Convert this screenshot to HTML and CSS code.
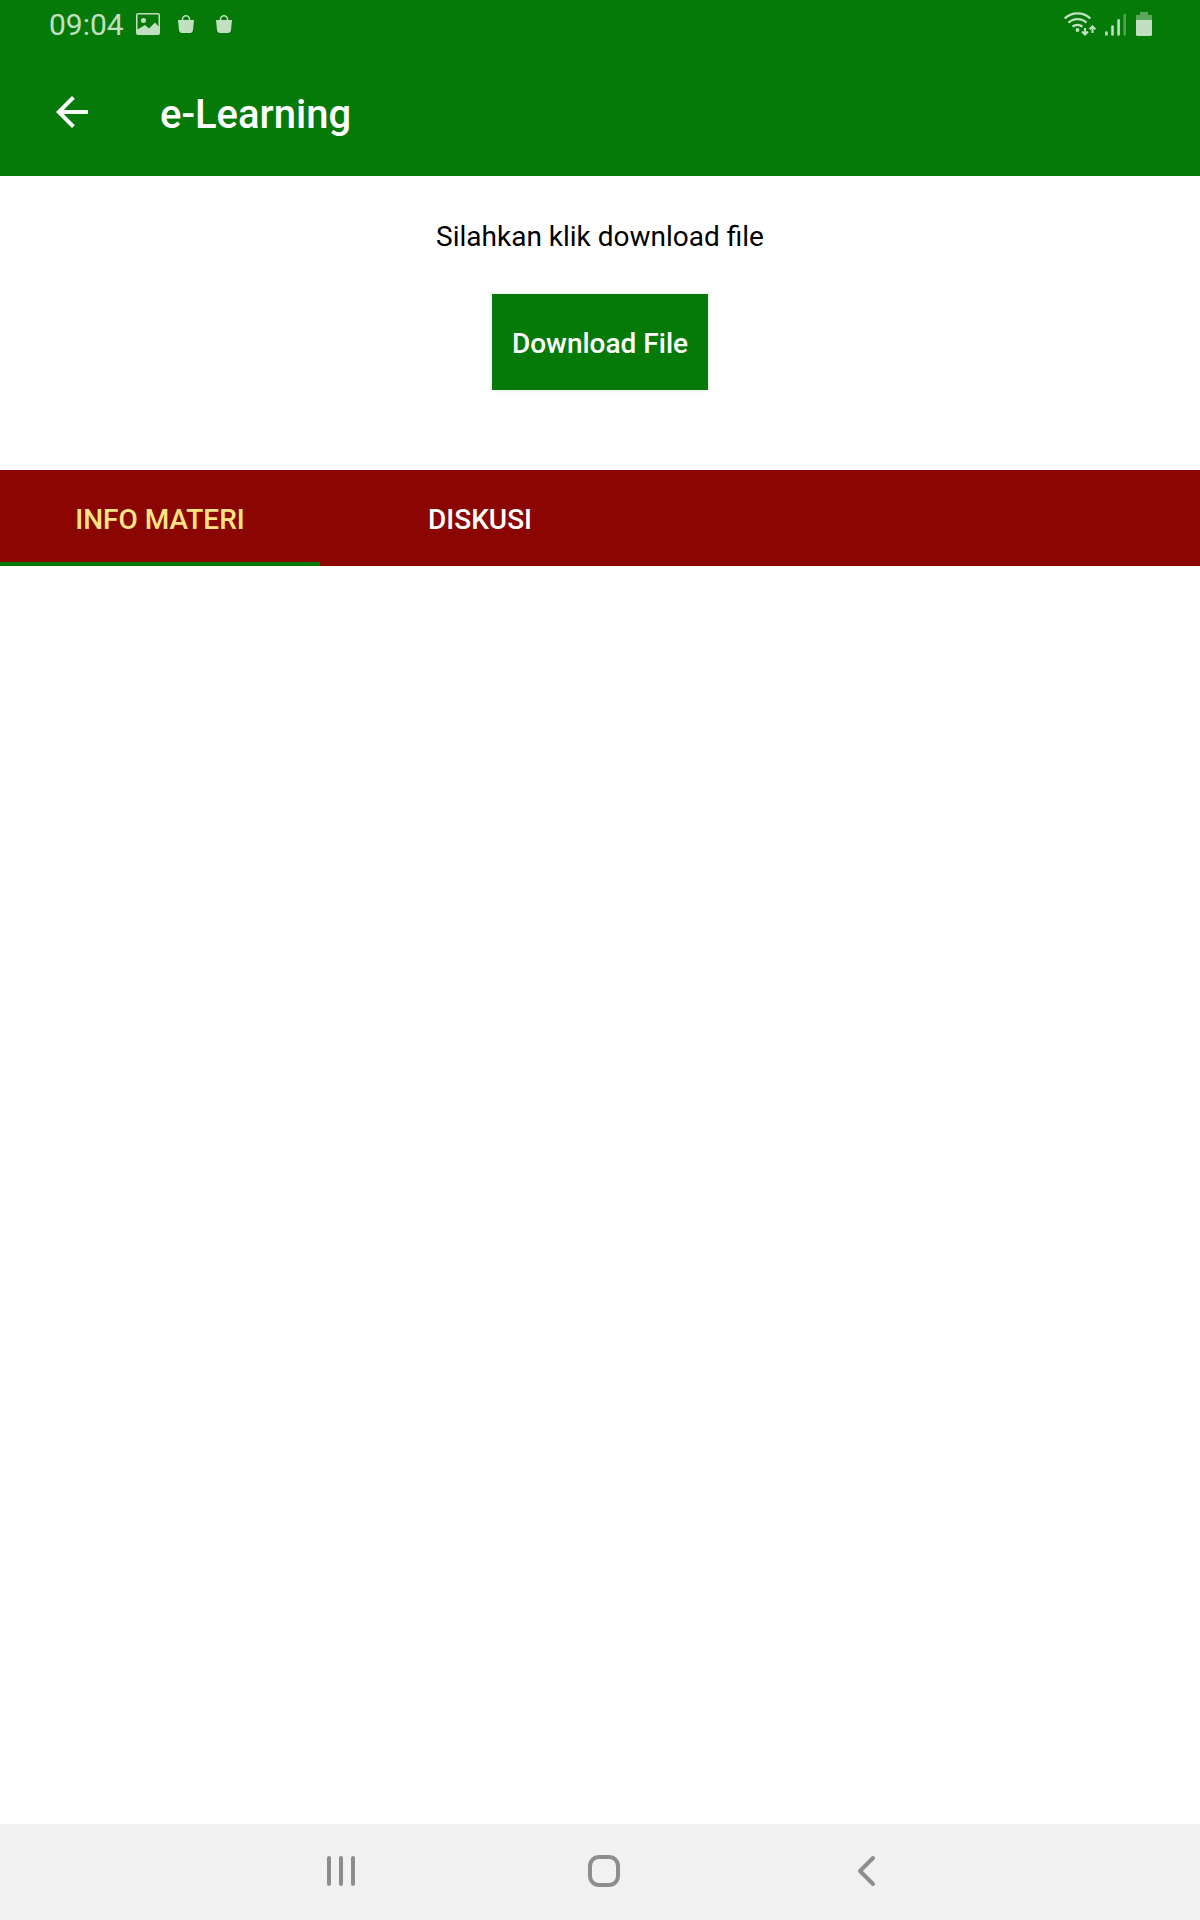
FILE: index.html
```html
<!DOCTYPE html>
<html lang="id">
<head>
  <meta charset="utf-8">
  <meta name="viewport" content="width=device-width, initial-scale=1">
  <title>e-Learning</title>
  <link rel="stylesheet" href="styles.css">
</head>
<body>
  <div class="screen">
    <div class="status-bar">
      <div class="status-group">
        <time class="clock">09:04</time>
        <svg class="icon-image" width="24" height="22" viewBox="0 0 24 22" aria-hidden="true">
          <path fill-rule="evenodd" fill="currentColor" d="M2 0h20q2 0 2 2v18q0 2-2 2H2q-2 0-2-2V2Q0 0 2 0zM1.500 1.500v15L9 12l4 3.500 6-6 3.500 4v-12zM7.500 5a2.500 2.500 0 1 1 0 5 2.500 2.500 0 0 1 0-5z"/>
        </svg>
        <div class="bags">
          <svg width="16" height="18" viewBox="0 0 16 18" aria-hidden="true">
            <path fill="none" stroke="currentColor" stroke-width="1.500" d="M4.500 5.500V4a3.500 3.250 0 0 1 7 0v1.500"/>
            <path fill="currentColor" d="M0 5h16l-1 10q-.4 3-3 3H4q-2.600 0-3-3z"/>
          </svg>
          <svg width="16" height="18" viewBox="0 0 16 18" aria-hidden="true">
            <path fill="none" stroke="currentColor" stroke-width="1.500" d="M4.500 5.500V4a3.500 3.250 0 0 1 7 0v1.500"/>
            <path fill="currentColor" d="M0 5h16l-1 10q-.4 3-3 3H4q-2.600 0-3-3z"/>
          </svg>
        </div>
      </div>
      <div class="status-group status-system">
        <svg width="32" height="24" viewBox="0 0 32 24" aria-hidden="true">
          <g fill="none" stroke="currentColor" stroke-width="2.300">
            <path d="M.7 6.500a18.500 18.500 0 0 1 25.600 0M4.500 10.700a13 13 0 0 1 18 0M8.500 14.700a7.500 7.500 0 0 1 10 0"/>
            <path stroke-width="2" d="M21 16v6.500M18 19.500l3 3 3-3M28.500 21v-6.500M25.500 17.300l3-3 3 3"/>
          </g>
          <circle cx="13.500" cy="18" r="1.900" fill="currentColor"/>
        </svg>
        <svg width="22" height="24" viewBox="0 0 22 24" aria-hidden="true">
          <g fill="none" stroke="currentColor" stroke-width="2.600" stroke-linecap="round">
            <path d="M1.400 20.500v2M7.500 14.500v8M13.600 8.300v14.200"/>
            <path d="M19.700 3v19.500" opacity=".4"/>
          </g>
        </svg>
        <svg width="16" height="24" viewBox="0 0 16 24" aria-hidden="true">
          <path fill="currentColor" opacity=".45" d="M4 0h8v3h4v5H0V3h4z"/>
          <path fill="currentColor" d="M0 8h16v14.500q0 1.500-1.500 1.500h-13Q0 24 0 22.500z"/>
        </svg>
      </div>
    </div>

    <header class="app-bar">
      <button class="back" type="button" aria-label="Kembali">
        <svg width="32" height="32" viewBox="0 0 32 32" aria-hidden="true">
          <path fill="currentColor" d="M32 14v4H7.700l11.100 11.200L16 32 0 16 16 0l2.800 2.800L7.700 14z"/>
        </svg>
      </button>
      <h1 class="title">e-Learning</h1>
    </header>

    <section class="download">
      <p class="hint">Silahkan klik download file</p>
      <button class="download-button" type="button">Download File</button>
    </section>

    <div class="tabs" role="tablist">
      <button class="tab tab-active" type="button" role="tab" aria-selected="true">INFO MATERI</button>
      <button class="tab" type="button" role="tab" aria-selected="false">DISKUSI</button>
    </div>

    <main class="content"></main>

    <nav class="nav-bar">
      <button class="nav-button" type="button" aria-label="Aplikasi terbaru">
        <svg width="32" height="32" viewBox="0 0 32 32" aria-hidden="true">
          <path fill="none" stroke="currentColor" stroke-width="4" stroke-linecap="round" d="M4 3v26M16 3v26M28 3v26"/>
        </svg>
      </button>
      <button class="nav-button" type="button" aria-label="Beranda">
        <svg width="32" height="32" viewBox="0 0 32 32" aria-hidden="true">
          <rect x="2" y="2" width="28" height="28" rx="9" fill="none" stroke="currentColor" stroke-width="4"/>
        </svg>
      </button>
      <button class="nav-button" type="button" aria-label="Kembali ke layar sebelumnya">
        <svg width="32" height="32" viewBox="0 0 32 32" aria-hidden="true">
          <path fill="none" stroke="currentColor" stroke-width="4" stroke-linecap="round" stroke-linejoin="round" d="M22 3L9 16l13 13"/>
        </svg>
      </button>
    </nav>
  </div>
</body>
</html>
```
FILE: styles.css
```css
* {
  box-sizing: border-box;
}

body {
  margin: 0;
  background: #fff;
  color: #000;
  font-family: Roboto, "Liberation Sans", sans-serif;
  font-size: 28px;
  line-height: 36px;
}

button {
  margin: 0;
  padding: 0;
  border: 0;
  background: none;
  color: inherit;
  font: inherit;
  cursor: pointer;
}

svg {
  display: block;
}

.screen {
  display: flex;
  flex-direction: column;
  min-height: 100vh;
}

.status-bar {
  display: flex;
  align-items: center;
  justify-content: space-between;
  height: 48px;
  padding: 0 48px 0 49px;
  background: #067a08;
  color: #c1dfc1;
}

.status-group {
  display: flex;
  align-items: center;
}

.clock {
  padding-top: 2px;
  font-size: 30px;
}

.icon-image {
  margin: 0 18px 0 12px;
}

.bags {
  display: flex;
  gap: 22px;
}

.status-system {
  gap: 9px;
}

.app-bar {
  display: flex;
  align-items: center;
  gap: 48px;
  height: 128px;
  padding: 0 40px;
  background: #067a08;
  color: #fff;
}

.back {
  display: grid;
  place-items: center;
  width: 64px;
  height: 64px;
}

.title {
  margin: 0;
  padding: 6px 8px 0;
  font-size: 40px;
  font-weight: 500;
  line-height: 48px;
}

.download {
  display: flex;
  flex-direction: column;
  align-items: center;
  gap: 39px;
  padding: 43px 20px 80px;
}

.hint {
  margin: 0;
}

.download-button {
  height: 96px;
  padding: 4px 20px 0;
  background: #067a08;
  color: #fff;
  font-weight: 500;
  box-shadow: 0 0 4px rgba(0, 0, 0, 0.15);
}

.tabs {
  display: flex;
  height: 96px;
  background: #8b0603;
  color: #fff;
}

.tab {
  width: 320px;
  padding-top: 8px;
  border-bottom: 4px solid transparent;
  font-weight: 500;
}

.tab-active {
  border-bottom-color: #067a08;
  color: #ffe486;
}

.content {
  flex: 1;
}

.nav-bar {
  display: flex;
  justify-content: center;
  height: 96px;
  padding: 0 0 2px 8px;
  background: #f1f1f1;
  color: #8d8d8d;
}

.nav-button {
  display: grid;
  place-items: center;
  width: 263px;
}
```
